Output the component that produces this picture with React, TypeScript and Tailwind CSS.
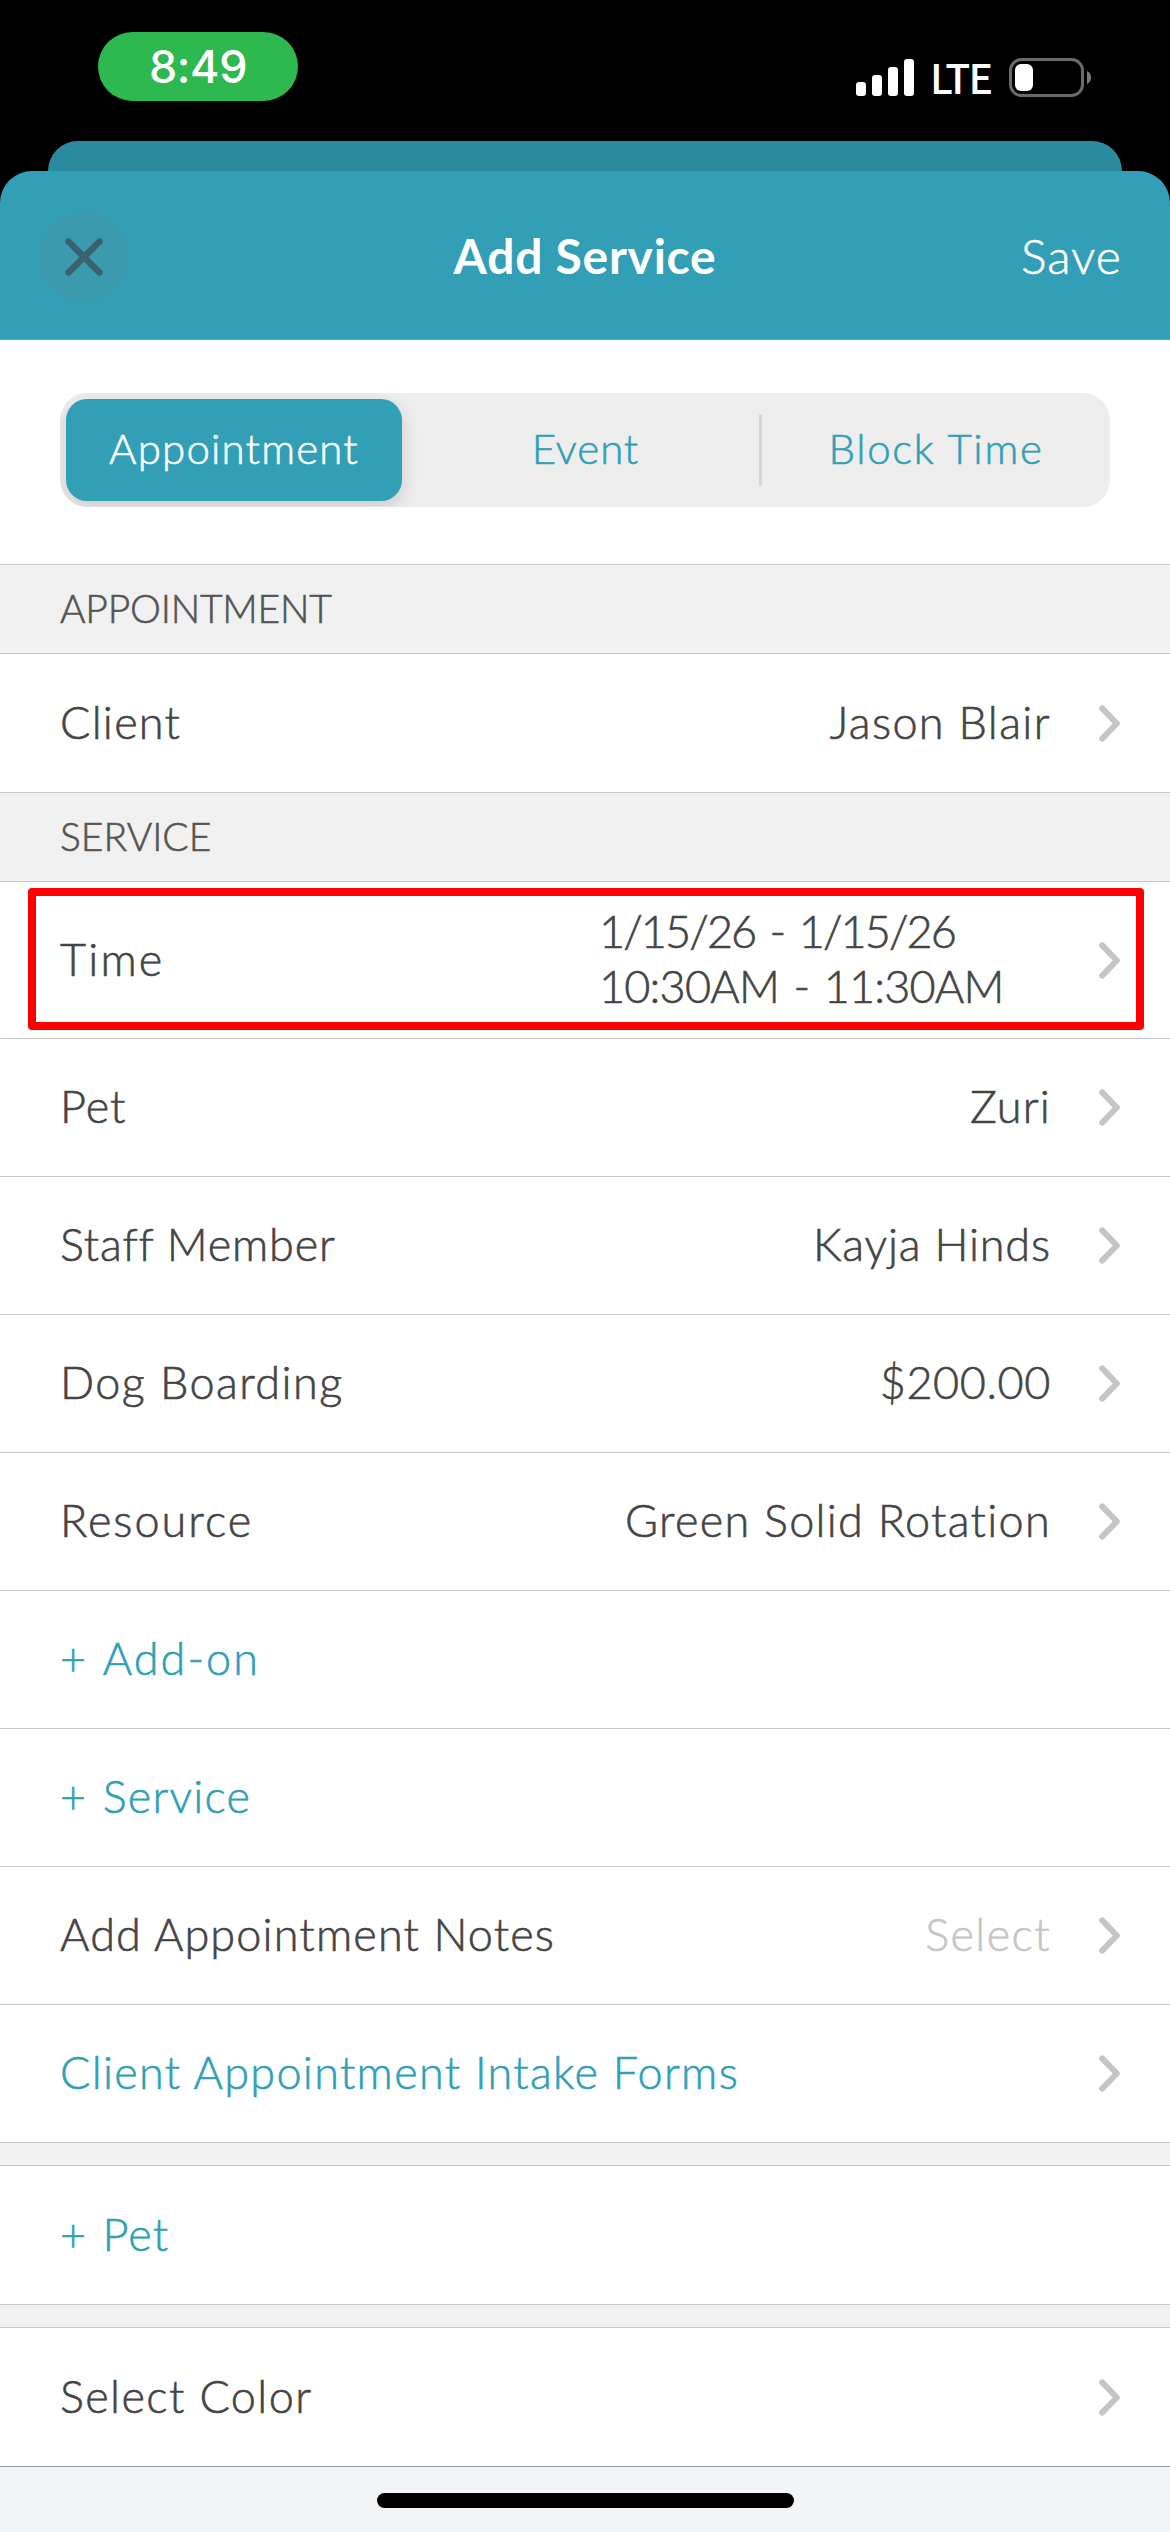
import { clsx } from 'clsx';

interface Row {
  label: string;
  labelClass?: string;
  value?: string;
  valueClass?: string;
  chevron?: boolean;
  link?: boolean;
  className?: string;
}

const serviceRows: Row[] = [
  { label: 'Pet', labelClass: 'tracking-[1px]', value: 'Zuri', valueClass: 'tracking-[1.2px]', chevron: true },
  { label: 'Staff Member', labelClass: 'tracking-[0.8px]', value: 'Kayja Hinds', valueClass: 'tracking-[0.85px]', chevron: true },
  { label: 'Dog Boarding', labelClass: 'tracking-[1.45px]', value: '$200.00', valueClass: 'tracking-[0.6px]', chevron: true },
  { label: 'Resource', labelClass: 'tracking-[2px]', value: 'Green Solid Rotation', valueClass: 'tracking-[1.3px]', chevron: true },
  { label: '+ Add-on', labelClass: 'tracking-[2px] [word-spacing:2px]', link: true },
  { label: '+ Service', labelClass: 'tracking-[1.2px] [word-spacing:2px]', link: true },
  { label: 'Add Appointment Notes', labelClass: 'tracking-[1.15px]', value: 'Select', valueClass: 'tracking-[1.4px] text-[#c5c5c7]', chevron: true },
  { label: 'Client Appointment Intake Forms', labelClass: 'tracking-[1.3px]', link: true, chevron: true },
];

function Chevron() {
  return (
    <svg width="21" height="37" viewBox="0 0 21 37" fill="none" className="ml-12 shrink-0">
      <path d="M3.2 3.4L17.8 18.5L3.2 33.6" stroke="#c5c5c7" strokeWidth="6" strokeLinecap="round" strokeLinejoin="round" />
    </svg>
  );
}

function StatusBar() {
  return (
    <div className="flex h-[141px] items-start justify-between pr-[79px] pl-[98px]">
      <div className="mt-8 flex h-[69px] w-[200px] items-center justify-center rounded-full bg-[#2eb850] font-['Inter',sans-serif] text-[45px] leading-[69px] font-medium tracking-[-0.4px] text-white">
        8:49
      </div>
      <div className="mt-[58px] flex h-[39px] items-center text-white">
        <svg width="58" height="37" viewBox="0 0 58 37" fill="currentColor">
          <rect x="0" y="23" width="10" height="14" rx="3" />
          <rect x="16" y="16" width="10" height="21" rx="3" />
          <rect x="32" y="8" width="10" height="29" rx="3" />
          <rect x="48" y="0" width="10" height="37" rx="3" />
        </svg>
        <span className="ml-4 w-[79px] pb-[3px] font-['Noto_Sans_CJK_SC',sans-serif] text-[41px] leading-[39px] font-medium tracking-[-2px]">LTE</span>
        <svg width="82" height="39" viewBox="0 0 82 39" fill="none">
          <rect x="1.5" y="1.5" width="72" height="36" rx="11" stroke="#6b6b6b" strokeWidth="3" />
          <rect x="6" y="6" width="18" height="27" rx="6" fill="currentColor" />
          <path d="M78 13C80.5 14 82 16.5 82 19.5C82 22.500 80.500 25 78 26Z" fill="#7b7b7b" />
        </svg>
      </div>
    </div>
  );
}

function Header() {
  return (
    <header className="flex h-[169px] items-center rounded-t-[32px] border-b border-[#7f9ca3] bg-[#329fb7] px-[39px] text-white">
      <div className="flex flex-1">
        <button className="mt-[3px] flex size-[90px] items-center justify-center rounded-full bg-[#3c9aaf]">
          <svg width="38" height="38" viewBox="0 0 38 38" fill="none">
            <path d="M3.500 3.500L34.500 34.500M34.500 3.500L3.500 34.500" stroke="#3b626f" strokeWidth="6.500" strokeLinecap="round" />
          </svg>
        </button>
      </div>
      <h1 className="pt-0.5 text-[48px] leading-[58px] font-bold tracking-[0.75px]">Add Service</h1>
      <div className="flex flex-1 justify-end">
        <button className="mr-[9px] pt-px text-[48px] leading-[58px] tracking-[1.1px] [-webkit-text-stroke:0.6px]">Save</button>
      </div>
    </header>
  );
}

function SegmentedControl() {
  return (
    <div className="h-[225px] border-b border-[#c8c8c8] px-[60px] pt-[53px]">
      <div className="flex h-[114px] items-center overflow-hidden rounded-[27px] bg-[#eeeeee] pl-1.5 text-[42px] leading-[50px] text-[#329fb7] [-webkit-text-stroke:0.6px]">
        <button className="h-[102px] w-[336px] rounded-[21px] bg-[#329fb7] pb-1 tracking-[1.2px] text-white shadow-[0_6px_18px_rgba(0,0,0,0.15)]">
          Appointment
        </button>
        <button className="ml-2.5 h-[102px] w-[347px] pb-1 tracking-[0.9px]">Event</button>
        <span className="h-[72px] w-[3px] rounded-full bg-[#d6d6d6]" />
        <button className="h-[102px] flex-1 pb-1 tracking-[1.7px]">Block Time</button>
      </div>
    </div>
  );
}

function SectionHeader({ title, className }: { title: string; className?: string }) {
  return (
    <h2 className={clsx('flex h-[89px] items-center border-b border-[#c8c8c8] bg-[#f1f1f1] px-[60px] pb-0.5 text-[39px] leading-[46px] text-[#555555] [-webkit-text-stroke:0.6px]', className)}>
      {title}
    </h2>
  );
}

function ListRow({ label, labelClass, value, valueClass, chevron, link, className = 'h-[138px] border-[#c8c8c8]' }: Row) {
  return (
    <div className={clsx('flex items-center border-b bg-white pr-[50px] pl-[60px] [-webkit-text-stroke:0.6px]', className)}>
      <span className={clsx('pb-0.5 whitespace-nowrap', link && 'text-[#329fb7]', labelClass)}>{label}</span>
      <span className={clsx('ml-auto pb-0.5 whitespace-nowrap', valueClass)}>{value}</span>
      {chevron && <Chevron />}
    </div>
  );
}

function TimeRow() {
  return (
    <div className="relative flex h-[157px] items-center border-b border-[#c8c8c8] pr-[50px] pl-[60px] [-webkit-text-stroke:0.6px]">
      <span className="pb-0.5 tracking-[2.2px]">Time</span>
      <div className="ml-auto w-[452px] pb-0.5 whitespace-nowrap">
        <p className="tracking-[-1.9px] [word-spacing:4px]">1/15/26 - 1/15/26</p>
        <p className="tracking-[-0.8px] [word-spacing:3px]">10:30AM - 11:30AM</p>
      </div>
      <Chevron />
      {/* highlight frame */}
      <div className="absolute top-1.5 left-7 h-[142px] w-[1116px] rounded-[4px] border-8 border-[#ff0000]" />
    </div>
  );
}

export default function App() {
  return (
    <div className="min-h-[2532px] w-[1170px] bg-black font-['Lato',sans-serif] text-[45px] leading-[55px] font-light text-[#444444]">
      <StatusBar />
      <div className="mx-12 h-[30px] rounded-t-[30px] bg-[#2c8a9f]" />
      <Header />
      <main className="bg-white">
        <SegmentedControl />
        <SectionHeader title="APPOINTMENT" className="tracking-[-0.2px]" />
        <ListRow label="Client" labelClass="tracking-[1.25px]" value="Jason Blair" valueClass="tracking-[1.37px]" chevron className="h-[139px] border-[#c8c8c8]" />
        <SectionHeader title="SERVICE" />
        <TimeRow />
        {serviceRows.map((row) => (
          <ListRow key={row.label} {...row} />
        ))}
        <div className="h-[23px] border-b border-[#c8c8c8] bg-[#f1f1f1]" />
        <ListRow label="+ Pet" labelClass="tracking-[1.1px] [word-spacing:2px]" link className="h-[139px] border-[#c8c8c8]" />
        <div className="h-[23px] border-b border-[#c8c8c8] bg-[#f1f1f1]" />
        <ListRow label="Select Color" labelClass="tracking-[1.4px]" chevron className="h-[139px] border-[#9b9da0]" />
      </main>
      <footer className="flex h-[65px] justify-center bg-[#f3f4f6] pt-[26px]">
        <div className="h-[15px] w-[417px] rounded-full bg-black" />
      </footer>
    </div>
  );
}
